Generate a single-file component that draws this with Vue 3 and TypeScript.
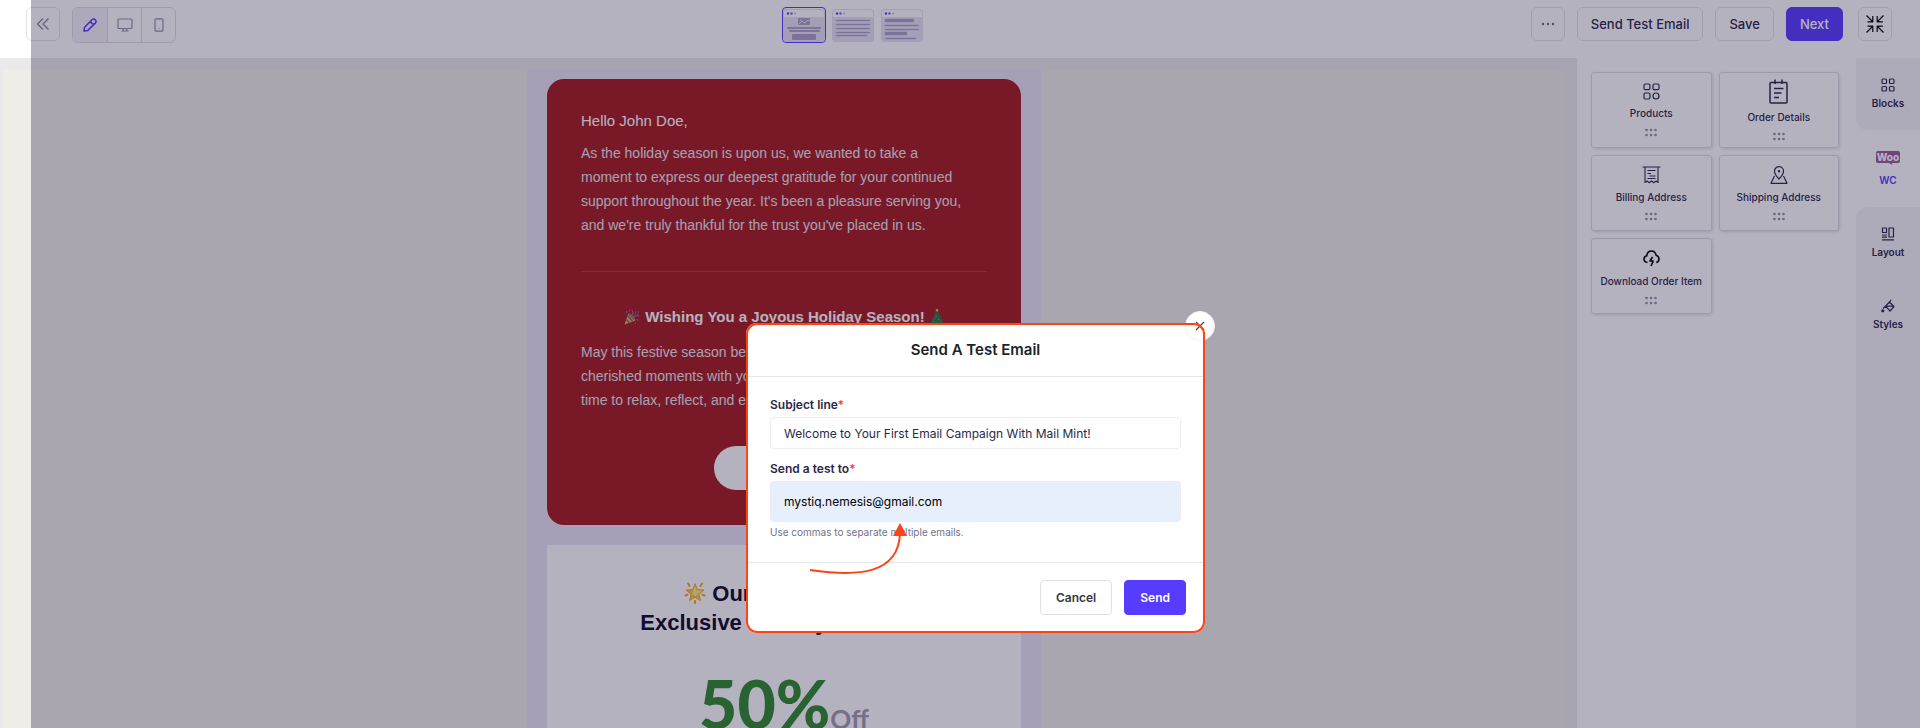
<script setup lang="ts">
import { ref } from 'vue'

interface Block {
  name: string
  icon: 'products' | 'order' | 'billing' | 'shipping' | 'download'
}

interface RailTab {
  name: string
  icon: 'blocks' | 'woo' | 'layout' | 'styles'
}

const blocks: Block[] = [
  { name: 'Products', icon: 'products' },
  { name: 'Order Details', icon: 'order' },
  { name: 'Billing Address', icon: 'billing' },
  { name: 'Shipping Address', icon: 'shipping' },
  { name: 'Download Order Item', icon: 'download' },
]

const tabs: RailTab[] = [
  { name: 'Blocks', icon: 'blocks' },
  { name: 'WC', icon: 'woo' },
  { name: 'Layout', icon: 'layout' },
  { name: 'Styles', icon: 'styles' },
]

const activeTab = ref('WC')
const view = ref('edit')
const template = ref(0)
const subject = ref('Welcome to Your First Email Campaign With Mail Mint!')
const recipients = ref('mystiq.nemesis@gmail.com')

// Line positions of the three small layout previews: [y, width, height]
const previews: number[][][] = [
  [],
  [[11, 34, 1], [15, 34, 1], [19, 34, 1], [23, 34, 1], [26, 31, 1]],
  [[10, 29, 3], [16, 34, 1], [20, 34, 1], [23, 22, 3], [29, 31, 1]],
]
</script>

<template>
  <div class="editor">
    <header class="toolbar">
      <div class="tools">
        <button class="square" type="button" aria-label="Collapse">
          <svg width="14" height="14" viewBox="0 0 14 14" class="line gray"><path d="M7 1.500 1.500 7 7 12.500M12.500 1.500 7 7l5.500 5.500" stroke-width="1.500" /></svg>
        </button>
        <div class="views">
          <button type="button" aria-label="Edit" :class="{ on: view === 'edit' }" @click="view = 'edit'">
            <svg width="14" height="14" viewBox="0 0 14 14" class="line violet"><path d="M.9 13.100 1.600 9.300 9 1.800a2.300 2.300 0 0 1 3.300 0 2.300 2.300 0 0 1 0 3.300L4.800 12.400ZM7.700 3.200q.3 2.600 3.200 3.200" stroke-width="1.500" /></svg>
          </button>
          <button type="button" aria-label="Desktop" :class="{ on: view === 'desktop' }" @click="view = 'desktop'">
            <svg width="16" height="14" viewBox="0 0 16 14" class="line gray"><path d="M2 1h12q1 0 1 1v7.500q0 1-1 1H2q-1 0-1-1V2q0-1 1-1ZM6.200 10.500v2.500M9.800 10.500v2.500M4.500 13h7" stroke-width="1.200" /></svg>
          </button>
          <button type="button" aria-label="Mobile" :class="{ on: view === 'mobile' }" @click="view = 'mobile'">
            <svg width="10" height="14" viewBox="0 0 10 14" class="line gray"><path d="M2 .8h6q1 0 1 1v10.400q0 1-1 1H2q-1 0-1-1V1.800q0-1 1-1ZM3.500 1.200h3M4.700 10.500h.6" stroke-width="1.200" /></svg>
          </button>
        </div>
      </div>

      <div class="previews">
        <button
          v-for="(lines, i) in previews"
          :key="i"
          type="button"
          class="preview"
          :class="{ on: template === i }"
          :aria-label="`Layout ${i + 1}`"
          @click="template = i"
        >
          <svg width="42" height="33" viewBox="0 0 42 33">
            <rect width="42" height="33" rx="4" fill="#e6e2f2" />
            <path d="M1 8V4q0-3 3-3h34q3 0 3 3v4Z" fill="#fff" />
            <circle cx="5" cy="4.500" r="1.200" fill="#573bff" />
            <circle cx="8.500" cy="4.500" r="1.200" fill="#7d68f5" />
            <circle cx="12" cy="4.500" r="1" fill="#c4bbf3" />
            <g v-if="i === 0" fill="#a9a1c4">
              <rect x="15" y="9" width="12" height="7" rx="1" />
              <path d="m16 15 3-3 3 2 3-3 2 1" stroke="#e6e2f2" fill="none" />
              <circle cx="18" cy="11" r=".8" fill="#e6e2f2" />
              <rect x="4" y="18" width="34" height="2" rx="1" />
              <rect x="6" y="21" width="31" height="2" rx="1" />
              <rect x="9" y="25" width="24" height="6" rx="1" />
            </g>
            <rect v-for="(l, n) in lines" :key="n" x="4" :y="l[0]" :width="l[1]" :height="l[2]" rx="1" fill="#a9a1c4" stroke="#a9a1c4" stroke-width=".4" />
          </svg>
        </button>
      </div>

      <div class="actions">
        <button class="square" type="button" aria-label="More">
          <svg width="14" height="4" viewBox="0 0 14 4" fill="#6b6880"><circle cx="2" cy="2" r="1.200" /><circle cx="7" cy="2" r="1.200" /><circle cx="12" cy="2" r="1.200" /></svg>
        </button>
        <button class="text-button" type="button">Send Test Email</button>
        <button class="text-button" type="button">Save</button>
        <button class="text-button next" type="button">Next</button>
        <button class="square" type="button" aria-label="Exit full screen">
          <svg width="18" height="18" viewBox="0 0 18 18" class="line black"><path d="M.5 .5 6.500 6.500M1.500 6.800h5.300V1M17.500.5l-6 6M11.200 1v5.800h5.600M.5 17.500l6-6M1.500 11.200h5.300V17M17.500 17.500l-6-6M11.200 17v-5.800h5.600" stroke-width="1.200" /></svg>
        </button>
      </div>
    </header>

    <div class="workspace">
      <main class="canvas">
        <div class="stage">
          <div class="email">
            <section class="greeting">
              <p class="hello">Hello John Doe,</p>
              <p>As the holiday season is upon us, we wanted to take a<br />moment to express our deepest gratitude for your continued<br />support throughout the year. It's been a pleasure serving you,<br />and we're truly thankful for the trust you've placed in us.</p>
              <hr />
              <h2>
                <svg width="16" height="16" viewBox="0 0 16 16" aria-hidden="true">
                  <path d="M.5 15.500 4.500 4.500l7 7Z" fill="#f5b52a" />
                  <path d="m2.500 10.500 3 3.200M3.800 7l4.700 5.200" stroke="#5b55c9" stroke-width="1.300" />
                  <ellipse cx="8" cy="8" rx="1.400" ry="4.600" transform="rotate(-45 8 8)" fill="#b9791a" />
                  <path d="M8 6q2-2 0-5M10 8q2-2 5-1" stroke="#a05bd6" fill="none" stroke-width="1.200" />
                  <path d="M9 7q3-1 3-5" stroke="#e4485f" fill="none" />
                  <path d="M2 3h1.500M5 1.500h1M14 3h1M13 11h1.500M11 14h1M13.500 5h1" stroke="#3f8be0" stroke-width="1.300" />
                </svg>
                <span>Wishing You a Joyous Holiday Season!</span>
                <svg width="14" height="16" viewBox="0 0 14 16" aria-hidden="true">
                  <rect x="6" y="13" width="2" height="3" fill="#7a4a20" />
                  <path d="m7 1 2.500 4H9l2.500 4H11l2.500 4.500q-6.500 2-13 0L3 9h-.5L5 5h-.5Z" fill="#1f7a3a" />
                  <circle cx="7" cy="1.300" r="1.200" fill="#f4c430" />
                  <path d="M6 6h1M8.500 8h1M4.500 10h1M9.500 12h1M6.500 12.500h1" stroke="#e8443c" stroke-width="1.200" />
                  <path d="M5.500 8h1M8 10.500h1M3 12.500h1" stroke="#57a7f2" stroke-width="1.200" />
                </svg>
              </h2>
              <p>May this festive season be filled with laughter, love, and<br />cherished moments with your loved ones. We hope you find<br />time to relax, reflect, and enjoy the magic of the season.</p>
              <a class="pill" href="#" aria-label="Open offer"></a>
            </section>
            <section class="offer">
              <h1>
                <svg width="22" height="22" viewBox="0 0 22 22" aria-hidden="true">
                  <path d="m11 1.500 2.400 6 6.600.5-5 4.300 1.500 6.400L11 15.200l-5.500 3.500L7 12.300 2 8l6.600-.5Z" fill="#fbc62f" stroke="#e8a51c" stroke-width=".8" />
                  <path d="m11 3.500 1.800 5 5 .3-4 3.400-2.800 1.800-3-2Z" fill="#ffe88c" />
                  <path d="m4 1.500 1.500 2.500M18 1.500l-1.500 2.500M1.500 13.500l2-.8M20.500 13.500l-2-.8M11 19v2" stroke="#f2a91c" stroke-width="2" stroke-linecap="round" />
                </svg>
                Our Gift for You:<br />Exclusive Holiday Discount
              </h1>
              <p class="percent">50%<span>Off</span></p>
            </section>
          </div>
        </div>
      </main>

      <aside class="blocks">
        <button v-for="b in blocks" :key="b.name" type="button" class="block">
          <svg v-if="b.icon === 'products'" width="17" height="17" viewBox="0 0 17 17" class="line ink"><path d="M2.500 1h3.200q1.200 0 1.200 1.200v3.200q0 1.200-1.200 1.200H2.200Q1 6.600 1 5.400V2.200Q1 1 2.500 1ZM11.200 1h3.600Q16 1 16 2.200v3.200q0 1.200-1.200 1.200h-3.600Q10 6.600 10 5.400V2.200Q10 1 11.200 1ZM2.200 10h3.500q1.200 0 1.200 1.200v3.600q0 1.200-1.200 1.200H2.200Q1 16 1 14.800v-3.600Q1 10 2.200 10Z" /><circle cx="13" cy="13" r="3" /></svg>
          <svg v-else-if="b.icon === 'order'" width="19" height="25" viewBox="0 0 19 25" class="line ink"><path d="M2 3.500h15q1 0 1 1v18.500q0 1-1 1H2q-1 0-1-1V4.500q0-1 1-1ZM6 .5v4.500M13 .5v4.500M5 9.500h9.500M5 14h7.500M5 18.500h5" stroke-width="1.500" /></svg>
          <svg v-else-if="b.icon === 'billing'" width="19" height="18" viewBox="0 0 19 18" class="line ink"><path d="M.5 1h18M3 1v15.500l2-1.500 2.200 1.800L9.500 15l2.300 1.800L14 15l2 1.500V1M5.500 4.500h8M5.500 7.500h3.500M7.500 10h6M5.500 12.500h8" stroke-width="1.100" /></svg>
          <svg v-else-if="b.icon === 'shipping'" width="18" height="18" viewBox="0 0 18 18" class="line ink"><path d="M9 13Q4.500 8.500 4.500 5a4.500 4.300 0 0 1 9 0q0 3.500-4.500 8ZM4.500 10 1 17.300h16L13.500 10" stroke-width="1.200" /><circle cx="9" cy="5.300" r=".6" /></svg>
          <svg v-else width="17" height="20" viewBox="0 -2 17 20" class="line black"><path d="M4.500 12.500Q1 12 1 9q0-2.500 2.700-3.200Q4.500 1 8.500 1q3.700 0 4.600 4.200Q16 6 16 9q0 2.700-2.700 3.500M9.500 7 7 11h3.200L8 16" stroke-width="1.600" /></svg>
          <span>{{ b.name }}</span>
          <svg width="12" height="9" viewBox="0 0 12 9" fill="#8f8ca3"><g v-for="y in [2, 7]" :key="y"><circle v-for="x in [1.5, 6, 10.5]" :key="x" :cx="x" :cy="y" r="1.300" /></g></svg>
        </button>
      </aside>

      <nav class="rail">
        <button
          v-for="t in tabs"
          :key="t.name"
          type="button"
          :class="{ on: activeTab === t.name, before: t.name === 'Blocks', after: t.name === 'Layout' }"
          @click="activeTab = t.name"
        >
          <svg v-if="t.icon === 'blocks'" width="14" height="14" viewBox="0 0 14 14" class="line ink"><rect x="1" y="1" width="4.500" height="4.500" rx="1" /><rect x="8.500" y="1" width="4.500" height="4.500" rx="1" /><rect x="1" y="8.500" width="4.500" height="4.500" rx="1" /><rect x="8.500" y="8.500" width="4.500" height="4.500" rx="1" /></svg>
          <svg v-else-if="t.icon === 'woo'" width="24" height="14" viewBox="0 0 24 14"><path d="M2 0h20q2 0 2 2v8q0 2-2 2h-6l.5 2-3.500-2H2q-2 0-2-2V2Q0 0 2 0Z" fill="#9b5c8f" /><text x="12" y="9.500" text-anchor="middle" class="woo">Woo</text></svg>
          <svg v-else-if="t.icon === 'layout'" width="14" height="14" viewBox="0 0 14 14" class="line ink"><path d="M1.500 1h4v4.500h-4ZM8 1h4.500v9H8ZM1 8h5M1 10.200h5M1 12.800h12" /></svg>
          <svg v-else width="14" height="14" viewBox="0 0 14 14" class="line ink"><path d="M8.500 3 13 7.500 9 12 4.500 7.200ZM10 .8 8 4.500M4.500 7.200h8.200M4.500 7.200 2 9.500" /><circle cx="1.800" cy="11.800" r="1" fill="#2b2948" /></svg>
          <span>{{ t.name }}</span>
        </button>
      </nav>
    </div>

    <div class="backdrop">
      <form class="modal" role="dialog" aria-labelledby="modal-title" @submit.prevent>
        <header><h3 id="modal-title">Send A Test Email</h3></header>
        <div class="fields">
          <label for="subject">Subject line<b>*</b></label>
          <input id="subject" v-model="subject" type="text" />
          <label for="recipients">Send a test to<b>*</b></label>
          <input id="recipients" v-model="recipients" type="text" class="filled" />
          <p>Use commas to separate multiple emails.</p>
        </div>
        <footer>
          <button type="button">Cancel</button>
          <button type="submit" class="send">Send</button>
        </footer>
        <button type="button" class="close" aria-label="Close">
          <svg width="10" height="10" viewBox="0 0 10 10" class="line dark"><path d="m1 1 8 8M9 1 1 9" /></svg>
        </button>
        <svg class="arrow" width="100" height="54" viewBox="0 0 100 54" aria-hidden="true">
          <path d="M1 48C50 55 89 52 91 12" fill="none" stroke="#ff4314" stroke-width="2" />
          <path d="M91 1 98 14H84Z" fill="#ff4314" />
        </svg>
      </form>
    </div>
  </div>
</template>

<style>
body {
  margin: 0;
  overflow: hidden;
}
</style>

<style scoped>
.editor {
  display: flex;
  flex-direction: column;
  height: 100vh;
  overflow: hidden;
  background: #fff;
  color: #2b2948;
  font-family: Inter, "Liberation Sans", sans-serif;
}
.editor * {
  box-sizing: border-box;
}
button {
  display: flex;
  align-items: center;
  justify-content: center;
  padding: 0;
  border: 0;
  background: none;
  color: inherit;
  font-family: inherit;
}
p, h1, h2, h3 {
  margin: 0;
}
.line { fill: none; stroke-width: 1.2; stroke-linejoin: round; }
.gray { stroke: #9391a3; }
.violet { stroke: #573bff; }
.black { stroke: #000; }
.ink { stroke: #2b2948; }
.dark { stroke: #444; }

.toolbar {
  display: flex;
  flex: none;
  align-items: flex-start;
  justify-content: space-between;
  height: 58px;
  padding: 7px 28px 0 26px;
}
.tools, .actions, .previews {
  display: flex;
  gap: 12px;
}
.square {
  width: 34px;
  height: 34px;
  border: 1px solid #e3e2e8;
  border-radius: 6px;
}
.views {
  display: flex;
  border: 1px solid #dddbe5;
  border-radius: 6px;
  overflow: hidden;
}
.views button {
  width: 34px;
  height: 34px;
}
.views button + button {
  border-left: 1px solid #dddbe5;
}
.views .on {
  background: #f3f2f7;
}
.previews {
  gap: 5px;
}
.preview {
  width: 44px;
  height: 36px;
  border: 1px solid transparent;
  border-radius: 4px;
}
.preview.on {
  border-color: #573bff;
}
.text-button {
  height: 34px;
  padding: 0 13px;
  border: 1px solid #e3e2e8;
  border-radius: 6px;
  font-size: 13px;
  font-weight: 500;
}
.next {
  margin-right: 3px;
  border-color: #573bff;
  background: #573bff;
  color: #fff;
}

.workspace {
  display: flex;
  flex: 1;
  min-height: 0;
}
.canvas {
  flex: 1;
  padding: 12px 12px 0 3px;
  background: #eaeaeb;
  overflow: hidden;
}
.stage {
  min-height: 100%;
  background: #eeede8;
}
.email {
  width: 514px;
  margin: 0 auto;
  padding: 9px 20px 0;
  background: #e7e3f3;
  font-family: "Liberation Sans", Arial, sans-serif;
}
.greeting {
  padding: 30px 34px 35px;
  border-radius: 17px;
  background: #a61c1c;
  color: #e8e4ea;
  font-size: 14px;
  line-height: 24px;
}
.hello {
  margin-bottom: 8px;
  color: #fff;
  font-size: 15px;
}
hr {
  height: 1px;
  margin: 34px 0 33px;
  border: 0;
  background: #b53a3a;
}
h2 {
  display: flex;
  align-items: center;
  justify-content: center;
  gap: 5px;
  margin-bottom: 11px;
  color: #fff;
  font-size: 15px;
  line-height: 24px;
}
.pill {
  display: block;
  width: 140px;
  height: 44px;
  margin: 34px auto 0;
  border-radius: 22px;
  background: #fff;
}
.offer {
  margin-top: 20px;
  padding: 34px 30px;
  background: #fff;
  text-align: center;
}
h1 {
  color: #0c0826;
  font-size: 22px;
  line-height: 29px;
}
h1 svg {
  vertical-align: -3px;
}
.percent {
  margin-top: 28px;
  color: #2f8a2b;
  font: 900 66px/77px Lato, sans-serif;
}
.percent span {
  color: #a09bab;
  font-size: 26px;
  font-weight: 700;
}

.blocks {
  display: grid;
  grid-template-columns: 1fr 1fr;
  grid-auto-rows: 76px;
  gap: 7px;
  align-content: start;
  width: 279px;
  padding: 14px 17px 14px 14px;
}
.block {
  flex-direction: column;
  border: 1px solid #dddbe3;
  border-radius: 3px;
  box-shadow: 1px 1px 3px #0000001f;
  font-size: 10px;
  font-weight: 500;
  line-height: 14px;
}
.block span {
  margin: 6px 0 8px;
}
.rail {
  display: flex;
  flex-direction: column;
  width: 64px;
  background: #fff;
}
.rail button {
  flex: none;
  flex-direction: column;
  gap: 4px;
  height: 72px;
  background: #f4f4f7;
  font-size: 10px;
  font-weight: 600;
  line-height: 14px;
}
.rail .before {
  border-bottom-left-radius: 12px;
}
.rail .on {
  height: 77px;
  gap: 8px;
  background: #fff;
  color: #573bff;
}
.rail .after {
  border-top-left-radius: 12px;
}
.rail::after {
  flex: 1;
  background: #f4f4f7;
  content: "";
}
.woo {
  fill: #fff;
  font: 800 10px Inter, sans-serif;
}

.backdrop {
  position: fixed;
  inset: 0 0 0 31px;
  display: flex;
  align-items: flex-start;
  justify-content: center;
  padding-top: 323px;
  background: rgba(30, 22, 64, 0.33);
}
.modal {
  position: relative;
  width: 459px;
  border-radius: 11px;
  background: #fff;
}
.modal::after {
  position: absolute;
  inset: 0;
  border: 2px solid #ff4314;
  border-radius: 11px;
  content: "";
  pointer-events: none;
}
.modal header {
  padding: 15px 24px 14px;
  border-bottom: 1px solid #e8e8ea;
  text-align: center;
}
h3 {
  color: #1d2327;
  font-size: 15px;
  font-weight: 600;
  line-height: 24px;
}
.fields {
  display: flex;
  flex-direction: column;
  padding: 20px 24px 23px;
}
label {
  margin-bottom: 4px;
  font-size: 12px;
  font-weight: 600;
  line-height: 16px;
}
label b {
  color: #f33;
  font-weight: 500;
}
input {
  width: 100%;
  height: 32px;
  margin-bottom: 12px;
  padding: 0 13px;
  border: 1px solid #ececf0;
  border-radius: 4px;
  background: #fff;
  color: #2b2948;
  font: 12px Inter, sans-serif;
}
.filled {
  height: 41px;
  margin-bottom: 3px;
  background: #e7effd;
  color: #000;
}
.fields p {
  color: #6f7285;
  font-size: 10px;
  line-height: 14px;
}
footer {
  display: flex;
  justify-content: flex-end;
  gap: 12px;
  padding: 17px 19px 18px;
  border-top: 1px solid #e8e8ea;
}
footer button {
  height: 35px;
  padding: 0 15px;
  border: 1px solid #dfdfe6;
  border-radius: 4px;
  color: #36373d;
  font-size: 12px;
  font-weight: 600;
}
footer .send {
  border-color: #573bff;
  background: #573bff;
  color: #fff;
}
.close {
  position: absolute;
  top: -12px;
  right: -10px;
  width: 30px;
  height: 30px;
  border: 1px solid #f2f2f4;
  border-radius: 50%;
  background: #fff;
}
.arrow {
  position: absolute;
  top: 199px;
  left: 63px;
}
</style>
